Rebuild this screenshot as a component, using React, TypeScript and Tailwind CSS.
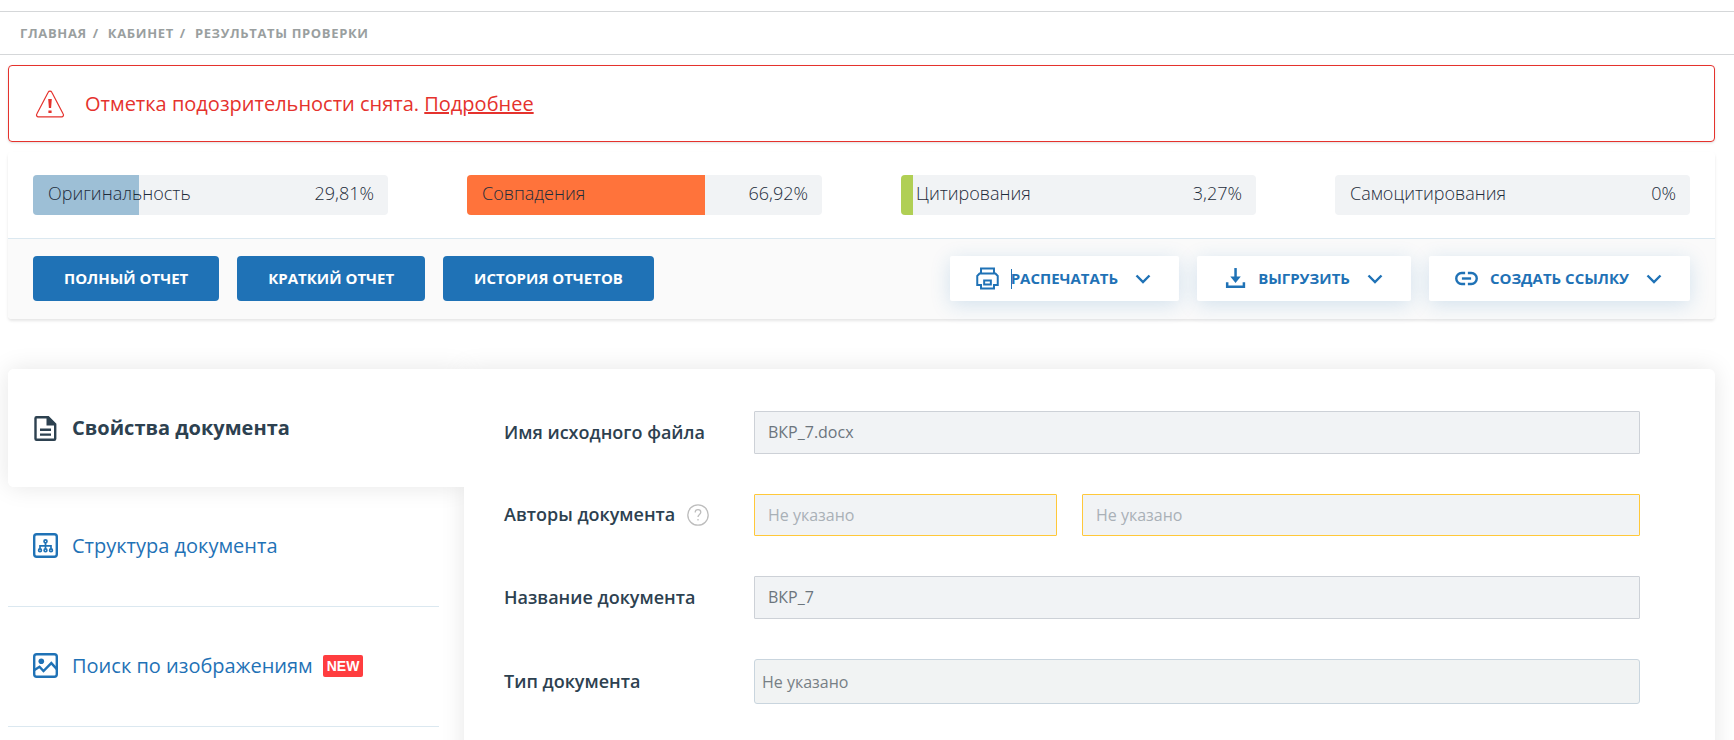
import React, { useState } from 'react';

interface Metric {
  label: string;
  value: string;
  percent: number;
  fill: string;
}

interface IconProps {
  className?: string;
}

const metrics: Metric[] = [
  { label: 'Оригинальность', value: '29,81%', percent: 29.81, fill: 'bg-[#9dbfd6]' },
  { label: 'Совпадения', value: '66,92%', percent: 66.92, fill: 'bg-[#ff733b]' },
  { label: 'Цитирования', value: '3,27%', percent: 3.27, fill: 'bg-[#b0cf54]' },
  { label: 'Самоцитирования', value: '0%', percent: 0, fill: 'bg-transparent' }
];

const reports = ['Полный отчет', 'Краткий отчет', 'История отчетов'];

const WarningIcon: React.FC<IconProps> = ({ className }) => (
  <svg className={className} viewBox="0 0 30 28" fill="none" aria-hidden="true">
    <path
      d="M13.2 2.2 1.8 24a1.8 1.8 0 0 0 1.6 2.8h23.2a1.8 1.8 0 0 0 1.6-2.8L16.8 2.2a2 2 0 0 0-3.6 0Z"
      stroke="currentColor"
      strokeWidth="1.2"
    />
    <path d="M13.2 9h3.6l-.7 9h-2.2ZM13.4 20.4h3.2V23h-3.2Z" fill="currentColor" />
  </svg>
);

const PrintIcon: React.FC<IconProps> = ({ className }) => (
  <svg className={className} viewBox="0 0 22 22" fill="none" stroke="currentColor" strokeWidth="1.9" aria-hidden="true">
    <path d="M4.8 6.3V1.5h12.4v4.8" />
    <path d="M4.8 17.2H1.2V8.6l2.2-2.3h15.2l2.2 2.3v8.6h-3.6" />
    <path d="M4.8 16.3v4.2h12.4v-4.2" />
    <path d="M7.8 13h6.4v3.8H7.8Z" />
  </svg>
);

const DownloadIcon: React.FC<IconProps> = ({ className }) => (
  <svg className={className} viewBox="0 0 22 22" fill="none" stroke="currentColor" strokeWidth="2.4" aria-hidden="true">
    <path d="M12 1v11" />
    <path d="M7 9.2h10l-5 6Z" fill="currentColor" stroke="none" />
    <path d="M4 14.6v4.4h16v-4.4" />
  </svg>
);

const LinkIcon: React.FC<IconProps> = ({ className }) => (
  <svg className={className} viewBox="0 0 22 22" fill="none" stroke="currentColor" strokeWidth="2.3" aria-hidden="true">
    <path d="M9.7 5.8H6.4a5.2 5.2 0 0 0 0 10.4h3.3" />
    <path d="M12.3 5.8h3.3a5.2 5.2 0 0 1 0 10.4h-3.3" />
    <path d="M6.6 11h8.8" />
  </svg>
);

const ChevronIcon: React.FC<IconProps> = ({ className }) => (
  <svg className={className} viewBox="0 0 16 16" fill="none" stroke="currentColor" strokeWidth="2.4" aria-hidden="true">
    <path d="m1.5 4.5 6.5 6.5 6.5-6.5" />
  </svg>
);

const DocumentIcon: React.FC<IconProps> = ({ className }) => (
  <svg className={className} viewBox="0 0 25 25" fill="none" stroke="currentColor" strokeWidth="2.4" aria-hidden="true">
    <path d="M3.5 1.2h11.7l7 7v14.6a1 1 0 0 1-1 1H3.5a1 1 0 0 1-1-1V2.2a1 1 0 0 1 1-1Z" />
    <path d="M13.5 1h2l7 7v1.4h-9Z" fill="currentColor" stroke="none" />
    <path d="M7 13.7h11M7 18.6h11" />
  </svg>
);

const StructureIcon: React.FC<IconProps> = ({ className }) => (
  <svg className={className} viewBox="0 0 25 25" fill="none" stroke="currentColor" strokeWidth="1.7" aria-hidden="true">
    <rect x="1.2" y="1.2" width="22.6" height="22.6" rx="2.5" strokeWidth="2.4" />
    <circle cx="12.5" cy="8.3" r="1.5" />
    <circle cx="7" cy="17.3" r="1.4" />
    <circle cx="12.5" cy="17.3" r="1.4" />
    <circle cx="18" cy="17.3" r="1.4" />
    <path d="M12.5 10v5.8M7 15.8v-3h11v3" />
  </svg>
);

const ImageIcon: React.FC<IconProps> = ({ className }) => (
  <svg className={className} viewBox="0 0 25 25" fill="none" stroke="currentColor" strokeWidth="2.4" aria-hidden="true">
    <rect x="1.2" y="1.2" width="22.6" height="22.6" rx="2.5" />
    <circle cx="8.3" cy="8.3" r="2.8" fill="currentColor" stroke="none" />
    <path d="m1.5 17 5-3.2 4 4.3 7.8-8 5.5 6" />
  </svg>
);

const HelpIcon: React.FC<IconProps> = ({ className }) => (
  <svg className={className} viewBox="0 0 22 22" fill="none" stroke="currentColor" strokeWidth="1.3" aria-hidden="true">
    <circle cx="11" cy="11" r="10.2" />
    <path d="M8.2 8.4c0-1.7 1.2-2.8 2.8-2.8s2.8 1 2.8 2.6c0 2.2-2.8 2.4-2.8 4.9" />
    <path d="M11 15v1.6" />
  </svg>
);

const exportActions = [
  { label: 'Распечатать', Icon: PrintIcon, caret: true },
  { label: 'Выгрузить', Icon: DownloadIcon, caret: false },
  { label: 'Создать ссылку', Icon: LinkIcon, caret: false }
];

const tabs = [
  { id: 'props', label: 'Свойства документа', Icon: DocumentIcon, isNew: false },
  { id: 'structure', label: 'Структура документа', Icon: StructureIcon, isNew: false },
  { id: 'images', label: 'Поиск по изображениям', Icon: ImageIcon, isNew: true }
];

const fieldClass =
  'h-[43px] w-full min-w-0 rounded-[1px] border border-[#cdd1d7] bg-[#f1f3f5] px-[13px] pb-0.5 text-base text-[#6c757d] outline-none';
const emptyFieldClass =
  'h-[42px] w-full min-w-0 rounded-[1px] border border-[#ffc83a] bg-[#f1f3f5] px-[13px] text-base outline-none placeholder:text-[#a9b0b7]';
const labelClass = 'pb-0.5 text-lg font-semibold text-[#2d4150]';
const rowClass = 'grid grid-cols-[250px_minmax(0,1fr)] items-center';

const MetricBar: React.FC<{ metric: Metric }> = ({ metric }) => (
  <div className="relative h-10 flex-1 overflow-hidden rounded bg-[#f1f3f5]">
    <div className={`absolute inset-y-0 left-0 ${metric.fill}`} style={{ width: `${metric.percent}%` }} />
    <div className="relative flex h-9 items-center justify-between pr-3.5 pl-[15px] text-lg font-light text-[#1d2c3b]">
      <span>{metric.label}</span>
      <span>{metric.value}</span>
    </div>
  </div>
);

export default function App() {
  const [activeTab, setActiveTab] = useState('props');

  return (
    <div className="min-h-screen overflow-hidden bg-white pt-[11px] font-['Open_Sans',sans-serif] text-[#2d4150]">
      {/* Breadcrumbs */}
      <nav className="flex h-11 items-center border-y border-[#d5d7d9] px-5 pt-0.5">
        <ol className="flex text-[13px] font-bold tracking-wider text-[#9a9f9f] uppercase">
          <li><a href="#main">Главная</a><span className="mr-[9px] ml-1.5">/</span></li>
          <li><a href="#cabinet">Кабинет</a><span className="mr-[9px] ml-1.5">/</span></li>
          <li>Результаты проверки</li>
        </ol>
      </nav>

      <main className="pr-[19px] pl-2">
        {/* Suspicion notice */}
        <div className="mt-2.5 flex h-[77px] items-center gap-5 rounded border border-[#e5322d] px-[26px] text-[#e5322d] shadow-sm">
          <WarningIcon className="h-7 w-[30px]" />
          <p className="text-xl">
            Отметка подозрительности снята.{' '}
            <a href="#details" className="underline">Подробнее</a>
          </p>
        </div>

        {/* Scores and reports */}
        <section className="mt-2.5 rounded shadow-[0_2px_3px_rgba(0,0,0,0.1)]">
          <div className="flex gap-[79px] px-[25px] pt-[23px] pb-[23px]">
            {metrics.map((metric) => (
              <MetricBar key={metric.label} metric={metric} />
            ))}
          </div>
          <div className="flex items-center justify-between rounded-b border-t border-[#dbe8f0] bg-[#fafafa] px-[25px] pt-[17px] pb-[18px]">
            <div className="flex gap-[18px]">
              {reports.map((report) => (
                <button
                  key={report}
                  type="button"
                  className="h-[45px] rounded bg-[#1f72b6] px-[31px] text-[15px] font-bold text-white uppercase"
                >
                  {report}
                </button>
              ))}
            </div>
            <div className="flex gap-[18px]">
              {exportActions.map(({ label, Icon, caret }) => (
                <button
                  key={label}
                  type="button"
                  className="flex h-[45px] items-center rounded-xs bg-white pr-7 pl-[26px] text-[15px] font-bold text-[#1f72b6] uppercase shadow-[0_4px_20px_rgba(31,114,182,0.18)]"
                >
                  <Icon className="mr-3 size-[23px]" />
                  {caret && <span className="-mr-px h-5 w-px bg-[#1f72b6]" />}
                  {label}
                  <ChevronIcon className="ml-[17px] size-4" />
                </button>
              ))}
            </div>
          </div>
        </section>

        {/* Document card */}
        <section className="mt-[50px] flex items-stretch">
          <div className="w-[456px] shrink-0">
            {tabs.map(({ id, label, Icon, isNew }) => (
              <div
                key={id}
                className={
                  activeTab === id
                    ? 'rounded-md shadow-[0_0_24px_rgba(0,0,0,0.1)]'
                    : 'mr-[25px] border-b border-[#dbe8f0]'
                }
              >
                {/* The active tab lies over the shadow of the form */}
                <button
                  type="button"
                  onClick={() => setActiveTab(id)}
                  className={`flex w-full items-center pl-[25px] text-xl ${
                    activeTab === id
                      ? 'relative z-20 h-[118px] rounded-l-md bg-white font-bold text-[#2d4150]'
                      : 'h-[119px] pb-0.5 text-[#1f72b6]'
                  }`}
                >
                  <Icon className="mr-[14px] size-[25px]" />
                  {label}
                  {isNew && (
                    <span className="ml-2.5 rounded-xs bg-[#ff3d3f] px-1 font-['Liberation_Sans',sans-serif] text-sm leading-[22px] font-bold text-white">
                      NEW
                    </span>
                  )}
                </button>
              </div>
            ))}
          </div>

          <form className="relative z-10 flex-1 space-y-10 rounded-r-md bg-white pt-[42px] pr-[75px] pb-20 pl-10 shadow-[0_0_24px_rgba(0,0,0,0.1)]">
            <div className={rowClass}>
              <label htmlFor="file" className={labelClass}>Имя исходного файла</label>
              <input id="file" className={fieldClass} defaultValue="ВКР_7.docx" readOnly />
            </div>
            <div className={rowClass}>
              <div className="flex items-center gap-3">
                <label htmlFor="surname" className={labelClass}>Авторы документа</label>
                <HelpIcon className="size-[22px] text-[#bdbdbd]" />
              </div>
              <div className="grid grid-cols-[303px_minmax(0,1fr)] gap-[25px]">
                <input id="surname" className={emptyFieldClass} placeholder="Не указано" />
                <input aria-label="Авторы документа" className={emptyFieldClass} placeholder="Не указано" />
              </div>
            </div>
            <div className={rowClass}>
              <label htmlFor="title" className={labelClass}>Название документа</label>
              <input id="title" className={fieldClass} defaultValue="ВКР_7" readOnly />
            </div>
            <div className={rowClass}>
              <label htmlFor="type" className={labelClass}>Тип документа</label>
              <select
                id="type"
                className="h-[45px] w-full appearance-none rounded-[3px] border border-[#c9d5de] bg-[#f1f3f3] px-[7px] text-base text-[#777f85] outline-none"
              >
                <option>Не указано</option>
              </select>
            </div>
          </form>
        </section>
      </main>
    </div>
  );
}
